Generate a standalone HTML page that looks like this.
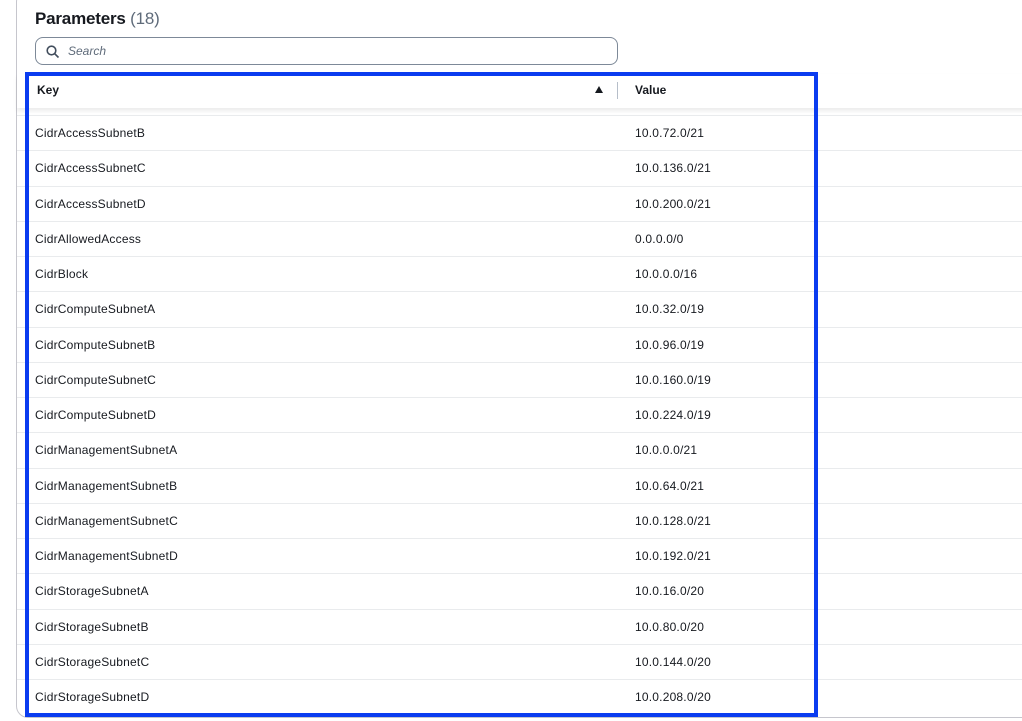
<!DOCTYPE html>
<html><head><style>
*{margin:0;padding:0;box-sizing:border-box}
body{width:1022px;height:721px;background:#fff;font-family:"Liberation Sans",sans-serif;color:#16191f;position:relative;overflow:hidden}
.panel{position:absolute;left:16px;top:-10px;width:1030px;height:728px;border:1px solid #c6c6cd;border-radius:12px;}
h1{position:absolute;left:35px;top:9px;font-size:17px;font-weight:bold;color:#16191f;letter-spacing:-0.2px}
h1 span{font-weight:normal;color:#5f6b7a}
.search{position:absolute;left:35px;top:37px;width:583px;height:28px;border:1px solid #7d8998;border-radius:8px}
.search span{position:absolute;left:32px;top:6px;font-size:12px;font-style:italic;color:#5f6b7a}
.search svg{position:absolute;left:10px;top:7px}
.head{position:absolute;left:17px;top:74px;width:1010px;height:34px;box-shadow:0 3px 4px rgba(0,0,0,0.08)}
.head b{position:absolute;top:9px;font-size:12px}
.sep{position:absolute;left:617px;top:82px;width:1px;height:17px;background:#b6bec9}
.tri{position:absolute;left:595px;top:86px;width:0;height:0;border-left:4.5px solid transparent;border-right:4.5px solid transparent;border-bottom:7px solid #16191f}
.line{position:absolute;left:17px;width:1010px;height:1px;background:#e9ebed}
.row{position:absolute;font-size:12px;left:35px;letter-spacing:0.2px}
.val{position:absolute;font-size:12px;left:635px;letter-spacing:0.2px}
.blue{position:absolute;left:25px;top:72px;width:793px;height:645px;border:4px solid #0a3cf0}
</style></head><body>
<div class="panel"></div>
<h1>Parameters <span>(18)</span></h1>
<div class="search"><svg width="14" height="14" viewBox="0 0 14 14"><circle cx="5.5" cy="5.5" r="4.3" fill="none" stroke="#414d5c" stroke-width="1.6"/><line x1="8.7" y1="8.7" x2="12.5" y2="12.5" stroke="#414d5c" stroke-width="1.6"/></svg><span>Search</span></div>
<div class="head"><b style="left:20px">Key</b><b style="left:618px">Value</b></div>
<div class="tri"></div><div class="sep"></div>
<div id="rows"></div>
<div class="line" style="top:115px"></div>
<div class="blue"></div>
<script>
var d=[["CidrAccessSubnetB","10.0.72.0/21"],["CidrAccessSubnetC","10.0.136.0/21"],["CidrAccessSubnetD","10.0.200.0/21"],["CidrAllowedAccess","0.0.0.0/0"],["CidrBlock","10.0.0.0/16"],["CidrComputeSubnetA","10.0.32.0/19"],["CidrComputeSubnetB","10.0.96.0/19"],["CidrComputeSubnetC","10.0.160.0/19"],["CidrComputeSubnetD","10.0.224.0/19"],["CidrManagementSubnetA","10.0.0.0/21"],["CidrManagementSubnetB","10.0.64.0/21"],["CidrManagementSubnetC","10.0.128.0/21"],["CidrManagementSubnetD","10.0.192.0/21"],["CidrStorageSubnetA","10.0.16.0/20"],["CidrStorageSubnetB","10.0.80.0/20"],["CidrStorageSubnetC","10.0.144.0/20"],["CidrStorageSubnetD","10.0.208.0/20"]];
var h="";for(var i=0;i<d.length;i++){var y=115+i*35.25;h+='<div class="row" style="top:'+(y+11)+'px">'+d[i][0]+'</div><div class="val" style="top:'+(y+11)+'px">'+d[i][1]+'</div>';if(i<d.length-1)h+='<div class="line" style="top:'+(y+35.25)+'px"></div>';}
document.getElementById("rows").innerHTML=h;
</script>
</body></html>
